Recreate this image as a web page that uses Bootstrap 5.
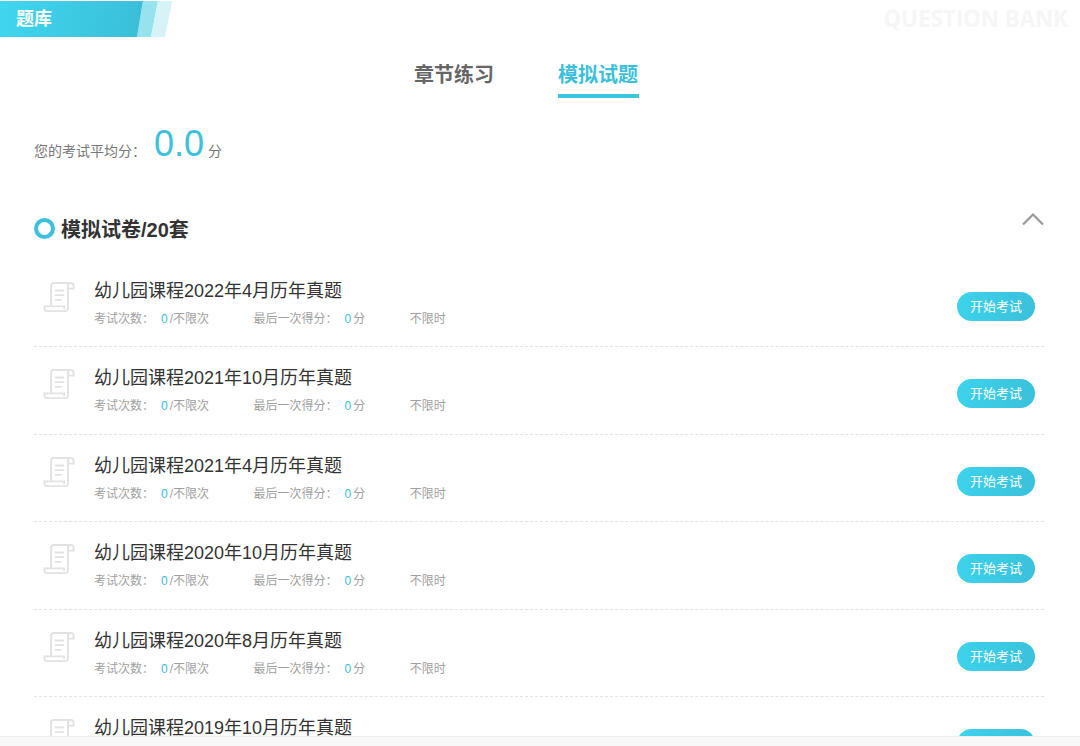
<!DOCTYPE html>
<html lang="zh-CN">
<head>
<meta charset="utf-8">
<title>题库</title>
<link rel="stylesheet" href="https://cdn.jsdelivr.net/npm/bootstrap@5.3.0/dist/css/bootstrap.min.css">
<style>
html,body{height:746px;overflow:hidden}
body{font-family:"Liberation Sans","Noto Sans CJK SC",sans-serif;background:#fff;color:#333}
.topbar{height:37px;padding-top:1px;margin-bottom:18px}
.ribbon{position:relative;width:172px;height:36px;padding-left:16px;line-height:36px;color:#fff;font-size:18px;font-weight:700;background:linear-gradient(100deg,#40d6ef,#3bbfd9 80%);clip-path:polygon(0 0,143px 0,137px 100%,0 100%)}
.ribbon-wrap{position:relative;width:172px;height:36px}
.ribbon-wrap::before,.ribbon-wrap::after{content:"";position:absolute;inset:0}
.ribbon-wrap::before{background:#97e2ef;clip-path:polygon(143px 0,158px 0,151px 100%,137px 100%)}
.ribbon-wrap::after{background:#d6f3f8;clip-path:polygon(158px 0,172px 0,165px 100%,151px 100%)}
.bank-en{font-family:"Open Sans",sans-serif;font-size:22.3px;font-weight:700;color:#f6f6f6;margin-right:12px;line-height:35px}
.tabs-row{gap:63px;height:43px;padding-right:28px}
.tab-item{font-size:20px;font-weight:700;color:#666;line-height:40px;height:43px;width:81px;text-align:center}
.tab-on{color:#3cbfdb;border-bottom:4px solid #3ac4df}
.score-row{margin:28px 0 0 34px;height:50px;font-size:14px;color:#777}
.score-num{font-size:36px;color:#3cc0dc;margin:0 4px 0 8px;line-height:36px}
.cn-colon{font-family:"Noto Sans CJK TC",sans-serif}
.sec-head{margin:23px 36px 0 34px;height:60.5px}
.ring{width:21px;height:21px;border:4.5px solid #3cc0dc;border-radius:50%;margin-right:6px;margin-top:19px}
.sec-title{font-size:20px;font-weight:700;color:#333;line-height:28px;margin-top:17px}
.chev{margin-top:12px}
.paper-list{margin:0 36px 0 34px}
.paper-row{height:87.5px;border-bottom:1px dashed #e2e2e2;position:relative}
.paper-icon{width:60px;flex:none;padding-left:9px;padding-top:22px}
.paper-name{font-size:18px;color:#333;line-height:26px;margin-top:18px}
.paper-meta{font-size:12px;color:#a0a0a0;line-height:18px;margin-top:5px}
.paper-meta span.cell{margin-right:44.5px}
.hi{color:#3cc0dc;margin:0 2px 0 7px}
.go-btn{width:78px;height:29px;border-radius:15px;border:0;padding:1px 0 0;font-size:13px;color:#fff;background:linear-gradient(100deg,#3dd3ec,#3bc0da);margin-right:9px;margin-top:32px}
.bottom-strip{position:fixed;left:0;right:0;bottom:0;height:10px;background:#f8f8f8;border-top:1px solid #eee}
</style>
</head>
<body>
<div class="topbar d-flex justify-content-between">
  <div class="ribbon-wrap"><div class="ribbon">题库</div></div>
  <div class="bank-en">QUESTION BANK</div>
</div>
<div class="tabs-row d-flex justify-content-center">
  <div class="tab-item">章节练习</div>
  <div class="tab-item tab-on">模拟试题</div>
</div>
<div class="score-row d-flex align-items-baseline">
  <span>您的考试平均分<span class="cn-colon">：</span></span><span class="score-num">0.0</span><span>分</span>
</div>
<div class="sec-head d-flex justify-content-between">
  <div class="d-flex align-items-start">
    <div class="ring"></div>
    <div class="sec-title">模拟试卷/20套</div>
  </div>
  <svg class="chev" width="24" height="14" viewBox="0 0 24 14"><path d="M3 13.5 L13 3.5 L23 13.5" fill="none" stroke="#999" stroke-width="2.2"/></svg>
</div>
<div class="paper-list" id="list"></div>
<div class="bottom-strip"></div>
<template id="row">
  <div class="paper-row d-flex justify-content-between">
    <div class="d-flex">
      <div class="paper-icon">
        <svg width="33" height="30" viewBox="0 0 34 32" fill="none" stroke="#e2e2e2" stroke-width="2"><path d="M8 26V4a3 3 0 0 1 3-3h18a3 3 0 0 0-3 3v24a3 3 0 0 1-3 3H4a3 3 0 0 1-3-3v-2h21v3"/><path d="M29 1a3 3 0 0 1 3 3v3h-6"/><path d="M12 9h10M12 14h10M12 19h7"/></svg>
      </div>
      <div>
        <div class="paper-name"></div>
        <div class="paper-meta"><span class="cell">考试次数<span class="cn-colon">：</span><span class="hi">0</span>/不限次</span><span class="cell">最后一次得分<span class="cn-colon">：</span><span class="hi">0</span>分</span><span>不限时</span></div>
      </div>
    </div>
    <button type="button" class="go-btn">开始考试</button>
  </div>
</template>
<script>
["幼儿园课程2022年4月历年真题","幼儿园课程2021年10月历年真题","幼儿园课程2021年4月历年真题","幼儿园课程2020年10月历年真题","幼儿园课程2020年8月历年真题","幼儿园课程2019年10月历年真题"].forEach(function(t){
  var n=document.getElementById('row').content.cloneNode(true);
  n.querySelector('.paper-name').textContent=t;
  document.getElementById('list').appendChild(n);
});
</script>
<script src="https://cdn.jsdelivr.net/npm/bootstrap@5.3.0/dist/js/bootstrap.bundle.min.js"></script>
</body>
</html>
